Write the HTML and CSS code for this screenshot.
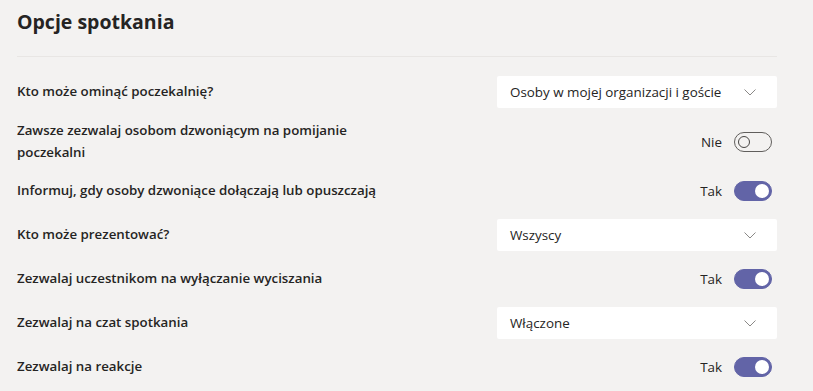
FILE: index.html
```html
<!DOCTYPE html>
<html lang="pl">
<head>
  <meta charset="UTF-8" />
  <meta name="viewport" content="width=device-width, initial-scale=1.0"/>
  <title>Opcje spotkania</title>
  <link rel="stylesheet" href="styles.css">
</head>
<body>
  <div class="page">
    <div class="header">
      <h1 class="title">Opcje spotkania</h1>
    </div>

    <div class="options">
      <div class="row">
        <div class="label">Kto może ominąć poczekalnię?</div>
        <div class="select">
          <span>Osoby w mojej organizacji i goście</span>
          <svg class="chevron" width="12" height="7" viewBox="0 0 12 7"><path d="M0.5 0.5 L6 6 L11.5 0.5" fill="none" stroke="#8a8886" stroke-width="1"/></svg>
        </div>
      </div>

      <div class="row">
        <div class="label">Zawsze zezwalaj osobom dzwoniącym na pomijanie poczekalni</div>
        <div class="switch-group">
          <span>Nie</span>
          <div class="switch"><div class="knob"></div></div>
        </div>
      </div>

      <div class="row">
        <div class="label">Informuj, gdy osoby dzwoniące dołączają lub opuszczają</div>
        <div class="switch-group">
          <span>Tak</span>
          <div class="switch on"><div class="knob"></div></div>
        </div>
      </div>

      <div class="row">
        <div class="label">Kto może prezentować?</div>
        <div class="select">
          <span>Wszyscy</span>
          <svg class="chevron" width="12" height="7" viewBox="0 0 12 7"><path d="M0.5 0.5 L6 6 L11.5 0.5" fill="none" stroke="#8a8886" stroke-width="1"/></svg>
        </div>
      </div>

      <div class="row">
        <div class="label">Zezwalaj uczestnikom na wyłączanie wyciszania</div>
        <div class="switch-group">
          <span>Tak</span>
          <div class="switch on"><div class="knob"></div></div>
        </div>
      </div>

      <div class="row">
        <div class="label">Zezwalaj na czat spotkania</div>
        <div class="select">
          <span>Włączone</span>
          <svg class="chevron" width="12" height="7" viewBox="0 0 12 7"><path d="M0.5 0.5 L6 6 L11.5 0.5" fill="none" stroke="#8a8886" stroke-width="1"/></svg>
        </div>
      </div>

      <div class="row">
        <div class="label">Zezwalaj na reakcje</div>
        <div class="switch-group">
          <span>Tak</span>
          <div class="switch on"><div class="knob"></div></div>
        </div>
      </div>
    </div>
  </div>
</body>
</html>
```

FILE: styles.css
```css
:root {
  --bg: #f3f2f1;
  --text: #252423;
  --accent: #6264a7;
  --divider: #e8e6e4;
}

body {
  margin: 0;
  padding: 0;
  font-family: 'Open Sans', 'Noto Sans', sans-serif;
  background: var(--bg);
  color: var(--text);
}

.page {
  padding: 0 36px 0 17px;
}

.header {
  border-bottom: 1px solid var(--divider);
  height: 57px;
  box-sizing: border-box;
  padding-top: 8px;
}

.title {
  margin: 0;
  font-size: 19.5px;
  font-weight: 700;
  line-height: 28px;
}

.options {
  display: flex;
  flex-direction: column;
  gap: 12px;
  padding-top: 19px;
}

.row {
  display: flex;
  justify-content: space-between;
  align-items: center;
  min-height: 32px;
}

.label {
  max-width: 370px;
  font-size: 13.3px;
  font-weight: 600;
  line-height: 21.5px;
}

.select {
  width: 280px;
  height: 32px;
  box-sizing: border-box;
  background: #fff;
  border-radius: 2px;
  padding: 0 21px 0 13px;
  display: flex;
  align-items: center;
  justify-content: space-between;
  font-size: 13.4px;
}

.switch-group {
  display: flex;
  align-items: center;
  gap: 12px;
  margin-right: 5px;
  font-size: 13.4px;
}

.switch {
  width: 38px;
  height: 20px;
  box-sizing: border-box;
  border: 1px solid #605e5c;
  border-radius: 10px;
  display: flex;
  align-items: center;
  padding: 0 3px;
}

.knob {
  width: 12px;
  height: 12px;
  box-sizing: border-box;
  border: 1px solid #484644;
  border-radius: 50%;
}

.switch.on {
  background: var(--accent);
  border-color: var(--accent);
  justify-content: flex-end;
  padding: 0 2px;
}

.switch.on .knob {
  width: 14px;
  height: 14px;
  border: none;
  background: #fff;
}
```
